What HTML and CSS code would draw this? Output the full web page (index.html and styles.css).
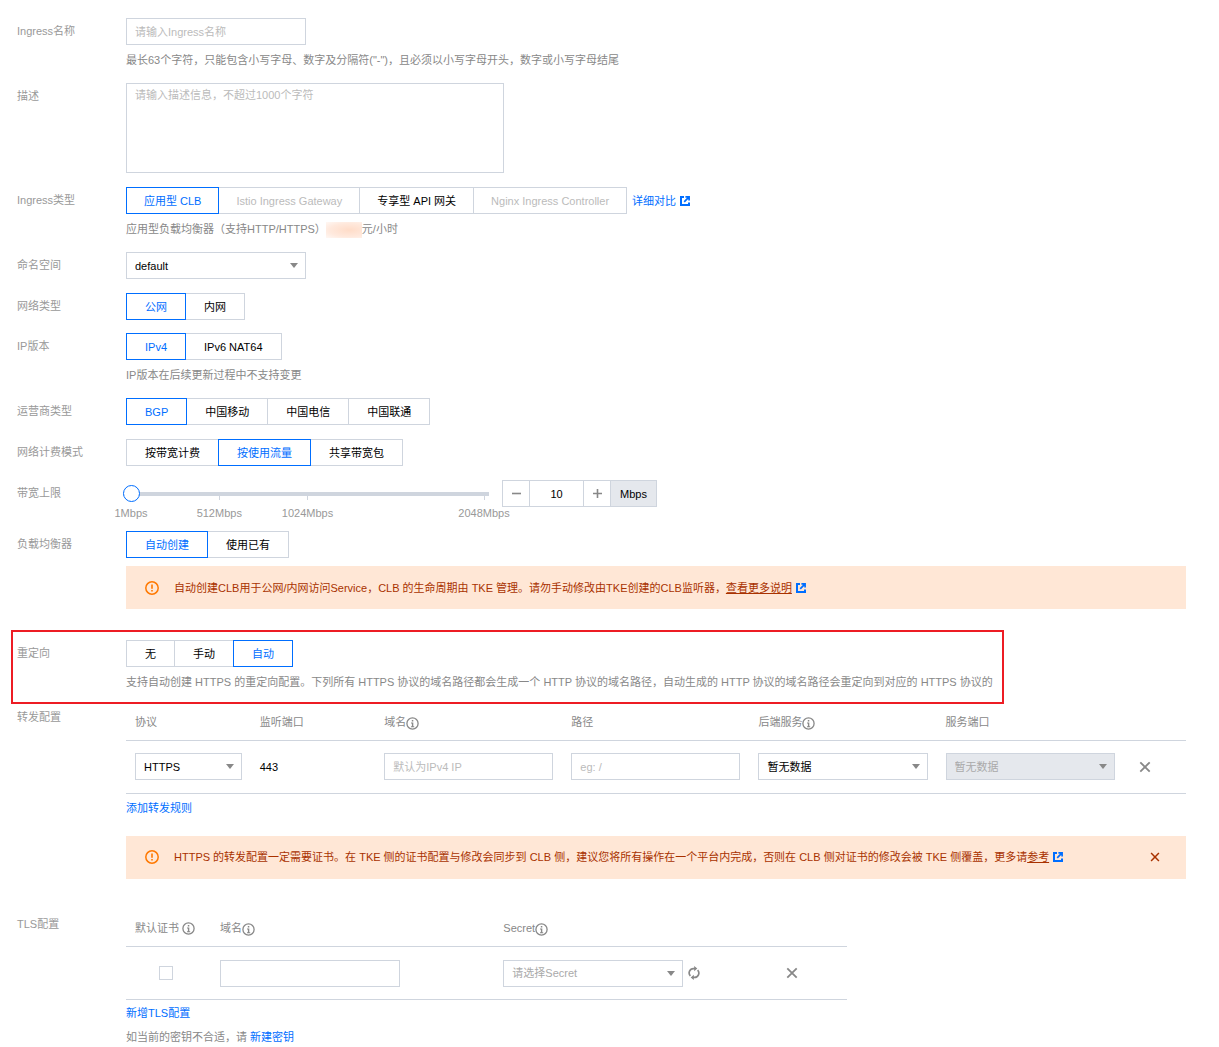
FILE: index.html
```html
<!DOCTYPE html>
<html lang="zh-CN">
<head>
  <meta charset="UTF-8" />
  <meta name="viewport" content="width=device-width, initial-scale=1.0" />
  <title>新建Ingress</title>
  <link rel="stylesheet" href="styles.css">
</head>
<body>
  <!-- shared icons -->
  <svg class="sprite" width="0" height="0">
    <symbol id="icon-info" viewBox="0 0 13 13">
      <circle cx="6.5" cy="6.5" r="5.6" fill="none" stroke="currentColor" stroke-width="1.3"/>
      <path d="M5.8 3h1.5v1.4H5.8zM5 5.4h2.3v3.8h.9v1H5v-1h.9V6.4H5z" fill="currentColor"/>
    </symbol>
    <symbol id="icon-warn" viewBox="0 0 14 14">
      <circle cx="7" cy="7" r="6.2" fill="none" stroke="currentColor" stroke-width="1.5"/>
      <path d="M6.2 3.4h1.6v4.4H6.2zM6.2 9h1.6v1.5H6.2z" fill="currentColor"/>
    </symbol>
    <symbol id="icon-link" viewBox="0 0 10 10">
      <path d="M4 1H1v8h8V6.4" fill="none" stroke="currentColor" stroke-width="2"/>
      <path d="M5.4.9h3.7v3.7M8.8 1.2L4.2 5.8" fill="none" stroke="currentColor" stroke-width="1.7"/>
    </symbol>
    <symbol id="icon-close" viewBox="0 0 12 12">
      <path d="M1.3 1.3l9.4 9.4M10.7 1.3l-9.4 9.4" fill="none" stroke="currentColor" stroke-width="1.8"/>
    </symbol>
    <symbol id="icon-refresh" viewBox="0 0 12 14">
      <path d="M7.5 2.6H5.6A4.3 4.3 0 0 0 2.4 9.9M4.5 11.4h1.9A4.3 4.3 0 0 0 9.6 4.1" fill="none" stroke="currentColor" stroke-width="1.7"/>
      <path d="M6.2 0l3.1 2.6-3.1 2.6zM5.8 8.8v5.2l-3.1-2.6z" fill="currentColor"/>
    </symbol>
  </svg>

  <form class="form">
    <div class="row">
      <label class="label" for="name">Ingress名称</label>
      <div class="content">
        <input class="input input-m" id="name" type="text" placeholder="请输入Ingress名称">
        <p class="hint">最长63个字符，只能包含小写字母、数字及分隔符("-")，且必须以小写字母开头，数字或小写字母结尾</p>
      </div>
    </div>

    <div class="row">
      <label class="label" for="desc">描述</label>
      <div class="content">
        <textarea class="textarea" id="desc" placeholder="请输入描述信息，不超过1000个字符"></textarea>
      </div>
    </div>

    <div class="row">
      <span class="label" id="type-label">Ingress类型</span>
      <div class="content">
        <div class="line">
          <div class="segment segment-compact" role="group" aria-labelledby="type-label">
            <button type="button" class="active">应用型 CLB</button>
            <button type="button" disabled>Istio Ingress Gateway</button>
            <button type="button">专享型 API 网关</button>
            <button type="button" disabled>Nginx Ingress Controller</button>
          </div>
          <a class="link" href="#">详细对比 <svg class="ext"><use href="#icon-link"/></svg></a>
        </div>
        <p class="hint">应用型负载均衡器（支持HTTP/HTTPS）<span class="price"></span>元/小时</p>
      </div>
    </div>

    <div class="row">
      <label class="label" for="namespace">命名空间</label>
      <div class="content">
        <div class="select input-m">
          <select id="namespace"><option>default</option></select>
        </div>
      </div>
    </div>

    <div class="row row-tight">
      <span class="label" id="net-label">网络类型</span>
      <div class="content">
        <div class="segment" role="group" aria-labelledby="net-label">
          <button type="button" class="active">公网</button>
          <button type="button">内网</button>
        </div>
      </div>
    </div>

    <div class="row">
      <span class="label" id="ip-label">IP版本</span>
      <div class="content">
        <div class="segment" role="group" aria-labelledby="ip-label">
          <button type="button" class="active">IPv4</button>
          <button type="button">IPv6 NAT64</button>
        </div>
        <p class="hint">IP版本在后续更新过程中不支持变更</p>
      </div>
    </div>

    <div class="row">
      <span class="label" id="isp-label">运营商类型</span>
      <div class="content">
        <div class="segment" role="group" aria-labelledby="isp-label">
          <button type="button" class="active">BGP</button>
          <button type="button">中国移动</button>
          <button type="button">中国电信</button>
          <button type="button">中国联通</button>
        </div>
      </div>
    </div>

    <div class="row">
      <span class="label" id="billing-label">网络计费模式</span>
      <div class="content">
        <div class="segment" role="group" aria-labelledby="billing-label">
          <button type="button">按带宽计费</button>
          <button type="button" class="active">按使用流量</button>
          <button type="button">共享带宽包</button>
        </div>
      </div>
    </div>

    <div class="row row-slider">
      <label class="label" for="bandwidth">带宽上限</label>
      <div class="content bandwidth">
        <div class="slider">
          <input id="bandwidth" type="range" min="1" max="2048" value="1">
          <div class="ticks">
            <span>1Mbps</span>
            <span>512Mbps</span>
            <span>1024Mbps</span>
            <span>2048Mbps</span>
          </div>
        </div>
        <div class="stepper">
          <button type="button" aria-label="减少"><svg width="9" height="9"><path d="M0 4.5h9" stroke="currentColor" stroke-width="1.6"/></svg></button>
          <input type="text" value="10" aria-label="带宽值">
          <button type="button" aria-label="增加"><svg width="9" height="9"><path d="M0 4.5h9M4.5 0v9" stroke="currentColor" stroke-width="1.6"/></svg></button>
          <span class="unit">Mbps</span>
        </div>
      </div>
    </div>

    <div class="row row-lb">
      <span class="label" id="lb-label">负载均衡器</span>
      <div class="content">
        <div class="segment" role="group" aria-labelledby="lb-label">
          <button type="button" class="active">自动创建</button>
          <button type="button">使用已有</button>
        </div>
        <div class="alert">
          <svg class="warn"><use href="#icon-warn"/></svg>
          <p>自动创建CLB用于公网/内网访问Service，CLB 的生命周期由 TKE 管理。请勿手动修改由TKE创建的CLB监听器，<a href="#">查看更多说明</a> <svg class="ext"><use href="#icon-link"/></svg></p>
        </div>
      </div>
    </div>

    <div class="row row-marked">
      <span class="label" id="redirect-label">重定向</span>
      <div class="content">
        <div class="segment" role="group" aria-labelledby="redirect-label">
          <button type="button">无</button>
          <button type="button">手动</button>
          <button type="button" class="active">自动</button>
        </div>
        <p class="hint">支持自动创建 HTTPS 的重定向配置。下列所有 HTTPS 协议的域名路径都会生成一个 HTTP 协议的域名路径，自动生成的 HTTP 协议的域名路径会重定向到对应的 HTTPS 协议的</p>
      </div>
    </div>

    <div class="row row-rules">
      <span class="label">转发配置</span>
      <div class="content">
        <table class="table rules">
          <thead>
            <tr>
              <th class="col-s">协议</th>
              <th class="col-s">监听端口</th>
              <th class="col-m">域名<svg class="info info-low"><use href="#icon-info"/></svg></th>
              <th class="col-m">路径</th>
              <th class="col-m">后端服务<svg class="info info-low"><use href="#icon-info"/></svg></th>
              <th class="col-m">服务端口</th>
              <th></th>
            </tr>
          </thead>
          <tbody>
            <tr>
              <td><div class="select"><select aria-label="协议"><option>HTTPS</option></select></div></td>
              <td>443</td>
              <td><input class="input" type="text" placeholder="默认为IPv4 IP" aria-label="域名"></td>
              <td><input class="input" type="text" placeholder="eg: /" aria-label="路径"></td>
              <td><div class="select"><select aria-label="后端服务"><option>暂无数据</option></select></div></td>
              <td><div class="select"><select aria-label="服务端口" disabled><option>暂无数据</option></select></div></td>
              <td><button type="button" class="close" aria-label="删除"><svg><use href="#icon-close"/></svg></button></td>
            </tr>
          </tbody>
        </table>
        <p class="below"><a class="link" href="#">添加转发规则</a></p>
        <div class="alert alert-rules">
          <svg class="warn"><use href="#icon-warn"/></svg>
          <p>HTTPS 的转发配置一定需要证书。在 TKE 侧的证书配置与修改会同步到 CLB 侧，建议您将所有操作在一个平台内完成，否则在 CLB 侧对证书的修改会被 TKE 侧覆盖，更多请<a href="#">参考</a> <svg class="ext"><use href="#icon-link"/></svg></p>
          <button type="button" class="close" aria-label="关闭"><svg><use href="#icon-close"/></svg></button>
        </div>
      </div>
    </div>

    <div class="row">
      <span class="label">TLS配置</span>
      <div class="content">
        <table class="table tls">
          <thead>
            <tr>
              <th class="col-check">默认证书 <svg class="info"><use href="#icon-info"/></svg></th>
              <th class="col-domain">域名<svg class="info info-low"><use href="#icon-info"/></svg></th>
              <th class="col-secret">Secret<svg class="info info-low"><use href="#icon-info"/></svg></th>
              <th></th>
            </tr>
          </thead>
          <tbody>
            <tr>
              <td><input class="checkbox" type="checkbox" aria-label="默认证书"></td>
              <td><input class="input input-m" type="text" aria-label="域名"></td>
              <td>
                <div class="line">
                  <div class="select input-m"><select class="empty" aria-label="Secret"><option>请选择Secret</option></select></div>
                  <button type="button" class="refresh" aria-label="刷新"><svg width="12" height="14"><use href="#icon-refresh"/></svg></button>
                </div>
              </td>
              <td><button type="button" class="close" aria-label="删除"><svg><use href="#icon-close"/></svg></button></td>
            </tr>
          </tbody>
        </table>
        <p class="below"><a class="link" href="#">新增TLS配置</a></p>
        <p class="hint">如当前的密钥不合适，请 <a class="link" href="#">新建密钥</a></p>
      </div>
    </div>
  </form>
</body>
</html>
```
FILE: styles.css
```css
* {
  box-sizing: border-box;
}
body {
  margin: 0;
  padding: 18px 33px 0 17px;
  background: #fff;
  color: #000;
  font-family: "Liberation Sans", "Noto Sans CJK SC", sans-serif;
  font-size: 11px;
  line-height: 18px;
}
p {
  margin: 0;
}
svg {
  flex: none;
}
button, input, select, textarea {
  font: inherit;
  color: inherit;
  margin: 0;
  border-radius: 0;
}
button {
  background: #fff;
  cursor: pointer;
}
.sprite {
  position: absolute;
}

/* rows */
.row {
  display: grid;
  grid-template-columns: 109px minmax(0, 1fr);
  margin-bottom: 14px;
}
.row:last-child {
  margin-bottom: 0;
}
.row-tight {
  margin-bottom: 13px;
}
.row-slider {
  margin-bottom: 9px;
}
.row-lb {
  margin-bottom: 21px;
}
.row-marked {
  width: 993px;
  max-width: 100%;
  margin: 0 0 0 -6px;
  padding: 8px 4px 11px;
  border: 2px solid #ed1c24;
}
.row-rules {
  margin-bottom: 32px;
}
.label {
  line-height: 27px;
  color: #999;
}
.hint {
  margin-top: 6px;
  color: #888;
}
.line {
  display: flex;
  align-items: center;
  gap: 5px;
}
.link {
  color: #006eff;
  text-decoration: none;
}
.ext {
  width: 10px;
  height: 10px;
  margin-left: 1px;
  color: #006eff;
  vertical-align: -1px;
}
.price {
  display: inline-block;
  width: 36px;
  height: 16px;
  vertical-align: middle;
  background: radial-gradient(ellipse at 65% 50%, #ffdcc8, #ffe9dd 60%, #fff8f4);
}

/* fields */
.input, .textarea, .select select {
  display: block;
  width: 100%;
  height: 27px;
  padding: 0 8px;
  border: 1px solid #cfd5de;
  background: #fff;
  outline: none;
}
.input-m {
  width: 180px;
}
.textarea {
  width: 378px;
  height: 90px;
  padding: 2px 8px;
  resize: none;
}
::placeholder {
  color: #bbb;
  opacity: 1;
}
.select {
  position: relative;
}
.select select {
  appearance: none;
}
.select select:disabled {
  background: #e5e8ed;
  color: #aaa;
  opacity: 1;
}
.select .empty {
  color: #aaa;
}
.select::after {
  content: "";
  position: absolute;
  right: 8px;
  top: 11px;
  border: 4px solid transparent;
  border-top: 5px solid #888;
  border-bottom: 0;
  pointer-events: none;
}

.segment {
  display: flex;
}
.segment button {
  height: 27px;
  padding: 0 18px;
  border: 1px solid #cfd5de;
  white-space: nowrap;
}
.segment-compact button {
  padding: 0 17px;
}
.segment button + button {
  margin-left: -1px;
}
.segment .active {
  z-index: 1;
  border-color: #006eff;
  color: #006eff;
}
.segment button:disabled {
  color: #bbb;
}

/* bandwidth */
.bandwidth {
  display: flex;
  align-items: flex-start;
  gap: 13px;
}
.slider {
  width: 366px;
  margin-left: -3px;
}
.slider input {
  display: block;
  width: 100%;
  height: 27px;
  appearance: none;
  background: none;
}
.slider input::-webkit-slider-runnable-track {
  height: 4px;
  background: #cfd5de;
}
.slider input::-webkit-slider-thumb {
  appearance: none;
  width: 17px;
  height: 17px;
  margin-top: -7px;
  border: 1px solid #006eff;
  border-radius: 50%;
  background: #fff;
}
.ticks {
  display: grid;
  grid-template-columns: 1fr 1fr 2fr 0;
  margin: -11px 5px 0 8px;
  color: #999;
}
.ticks span {
  display: flex;
  flex-direction: column;
  align-items: center;
  width: 0;
}
.ticks span::before {
  content: "";
  width: 1px;
  height: 4px;
  margin-bottom: 4px;
  background: #cfd5de;
}
.ticks span:first-child::before {
  background: none;
}
.stepper {
  display: flex;
  height: 27px;
  border: 1px solid #cfd5de;
}
.stepper button {
  width: 26px;
  padding: 0;
  border: 0;
  color: #888;
}
.stepper input {
  width: 55px;
  padding: 0;
  border: 1px solid #cfd5de;
  border-width: 0 1px;
  text-align: center;
}
.unit {
  padding: 0 9px;
  border-left: 1px solid #cfd5de;
  background: #e5e8ed;
  line-height: 26px;
}

/* notices */
.alert {
  display: flex;
  align-items: center;
  min-height: 43px;
  margin-top: 8px;
  padding: 0 25px 0 19px;
  background: #ffe7d6;
  color: #a93200;
}
.alert-rules {
  margin-top: 19px;
}
.alert p {
  flex: 1;
}
.alert a {
  color: inherit;
  text-decoration: underline;
}
.warn {
  width: 14px;
  height: 14px;
  margin-right: 15px;
  color: #ff7800;
}

/* tables */
.table {
  width: 100%;
  table-layout: fixed;
  border-collapse: collapse;
}
.tls {
  width: 68%;
}
.table th, .table td {
  padding: 0 9px;
  border-bottom: 1px solid #cfd5de;
  text-align: left;
  font-weight: normal;
}
.table th {
  height: 36px;
  color: #888;
  white-space: nowrap;
}
.table td {
  height: 53px;
}
.col-s {
  width: 11.76%;
}
.col-m {
  width: 17.65%;
}
.col-check {
  width: 11.8%;
}
.col-domain {
  width: 39.3%;
}
.col-secret {
  width: 38.4%;
}
.info {
  width: 13px;
  height: 13px;
  vertical-align: -3px;
}
.info-low {
  vertical-align: -4px;
}
.close, .refresh {
  display: flex;
  align-items: center;
  justify-content: center;
  height: 18px;
  padding: 0;
  border: 0;
  background: none;
  color: #888;
}
.close {
  width: 24px;
}
.close svg {
  width: 12px;
  height: 12px;
}
.alert .close {
  width: 12px;
  color: #a93200;
}
.alert .close svg {
  width: 10px;
  height: 10px;
}
.checkbox {
  display: block;
  appearance: none;
  width: 14px;
  height: 14px;
  margin-left: 24px;
  border: 1px solid #cfd5de;
}
.below {
  margin-top: 5px;
}
.tls + .below {
  margin-top: 4px;
}
```
